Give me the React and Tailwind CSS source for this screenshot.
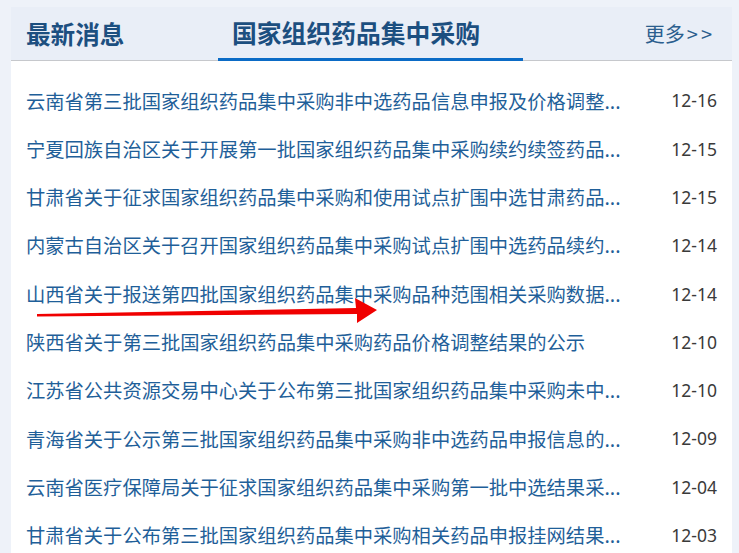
import React from 'react';

const news = [
    { title: '云南省第三批国家组织药品集中采购非中选药品信息申报及价格调整...', date: '12-16' },
    { title: '宁夏回族自治区关于开展第一批国家组织药品集中采购续约续签药品...', date: '12-15' },
    { title: '甘肃省关于征求国家组织药品集中采购和使用试点扩围中选甘肃药品...', date: '12-15' },
    { title: '内蒙古自治区关于召开国家组织药品集中采购试点扩围中选药品续约...', date: '12-14' },
    { title: '山西省关于报送第四批国家组织药品集中采购品种范围相关采购数据...', date: '12-14' },
    { title: '陕西省关于第三批国家组织药品集中采购药品价格调整结果的公示', date: '12-10' },
    { title: '江苏省公共资源交易中心关于公布第三批国家组织药品集中采购未中...', date: '12-10' },
    { title: '青海省关于公示第三批国家组织药品集中采购非中选药品申报信息的...', date: '12-09' },
    { title: '云南省医疗保障局关于征求国家组织药品集中采购第一批中选结果采...', date: '12-04' },
    { title: '甘肃省关于公布第三批国家组织药品集中采购相关药品申报挂网结果...', date: '12-03' },
];

const cjk = { fontFamily: '"Microsoft YaHei", "Noto Sans CJK SC", sans-serif' };

export default function App() {
    return (
        <div
            className="relative w-[739px] h-[553px] overflow-hidden bg-[#eef2f9] pl-[11px] pt-[7px] pr-[7px]"
            style={cjk}
        >
            <div className="bg-white h-full">
                <div className="flex items-stretch h-[54px] bg-[#e9eef7] border-b border-[#c6c8cc]">
                    <div className="w-[207px] pl-[15px] flex items-center text-[24.6px] font-bold text-[#1c4f80] leading-none">
                        最新消息
                    </div>
                    <div className="w-[305px] pl-[14px] -mb-px flex items-center border-b-[3px] border-[#0b6bc6] text-[24.8px] font-bold text-[#1c4f80] leading-none">
                        国家组织药品集中采购
                    </div>
                    <div className="flex-1 flex items-center justify-end pr-[17px] text-[20px] text-[#2b5e8e] leading-none">
                        更多<span className="ml-[2px] tracking-[3px]">&gt;&gt;</span>
                    </div>
                </div>

                <ul className="pt-[16px]">
                    {news.map((n, i) => (
                        <li key={i} className="flex items-center justify-between h-[48.3px] pl-[15px] pr-[15px]">
                            <span className="text-[19.3px] text-[#1f5f99] whitespace-nowrap leading-none">{n.title}</span>
                            <span
                                className="text-[17.5px] text-[#3a3a3a] leading-none"
                                style={{ fontFamily: '"Noto Sans", "Liberation Sans", sans-serif' }}
                            >
                                {n.date}
                            </span>
                        </li>
                    ))}
                </ul>
            </div>

            {/* red annotation arrow */}
            <svg className="absolute left-0 top-0 pointer-events-none" width="739" height="553">
                <polygon
                    points="37,314 356,308 355,298 377,310 357,323 357,314 37,316.5"
                    fill="#f00000"
                />
            </svg>
        </div>
    );
}
